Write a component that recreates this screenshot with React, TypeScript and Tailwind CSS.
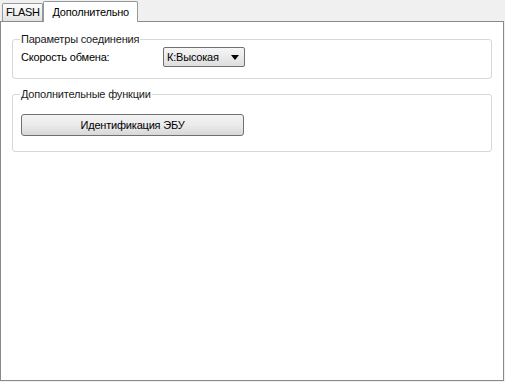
import React from "react";

// Window-style settings page: two tabs, two group boxes
const App: React.FC = () => {
  return (
    <div className="w-[505px] h-[382px] bg-[#f0f0f0] flex flex-col font-['Liberation_Sans',Arial,sans-serif] text-[11px] tracking-[-0.2px] text-black leading-none">
      {/* Tab strip */}
      <div className="h-[21px] flex items-end pl-[2px] shrink-0">
        <div className="h-[18px] px-[3px] flex items-center border border-b-0 border-[#919b9c] rounded-t-[2px] bg-gradient-to-b from-[#fcfcfc] to-[#e3e3e3] tracking-[-0.4px]">
          FLASH
        </div>
        <div className="relative z-10 h-[21px] -mb-px px-[8px] flex items-center border border-b-0 border-[#919b9c] rounded-t-[2px] bg-white">
          Дополнительно
        </div>
      </div>

      {/* Tab page */}
      <div className="flex-1 bg-white border border-[#8a8a8a] mr-px mb-px flex flex-col pt-[12px] px-[11px] gap-[10px]">
        <fieldset className="border border-[#d8d8d8] rounded-[3px] px-[7px] pb-[11px] pt-[2px]">
          <legend className="px-px text-[#1a1a1a]">Параметры соединения</legend>
          <div className="flex items-center">
            <span className="w-[143px] pl-px">Скорость обмена:</span>
            <div className="w-[82px] h-[20px] border border-[#707070] rounded-[2px] bg-gradient-to-b from-[#f6f6f6] to-[#dedede] flex items-center pl-[3px] pr-[5px]">
              <span className="flex-1">К:Высокая</span>
              <svg width="8" height="5" viewBox="0 0 8 5">
                <path d="M0 0 H8 L4 5 Z" fill="#000" />
              </svg>
            </div>
          </div>
        </fieldset>

        <fieldset className="border border-[#d8d8d8] rounded-[3px] px-[8px] pb-[15px] pt-[14px]">
          <legend className="px-px text-[#1a1a1a] -ml-px">Дополнительные функции</legend>
          <button className="w-[223px] h-[22px] border border-[#707070] rounded-[3px] bg-gradient-to-b from-[#f3f3f3] via-[#ebebeb] to-[#d8d8d8] flex items-center justify-center">
            Идентификация ЭБУ
          </button>
        </fieldset>
      </div>
    </div>
  );
};

export default App;
